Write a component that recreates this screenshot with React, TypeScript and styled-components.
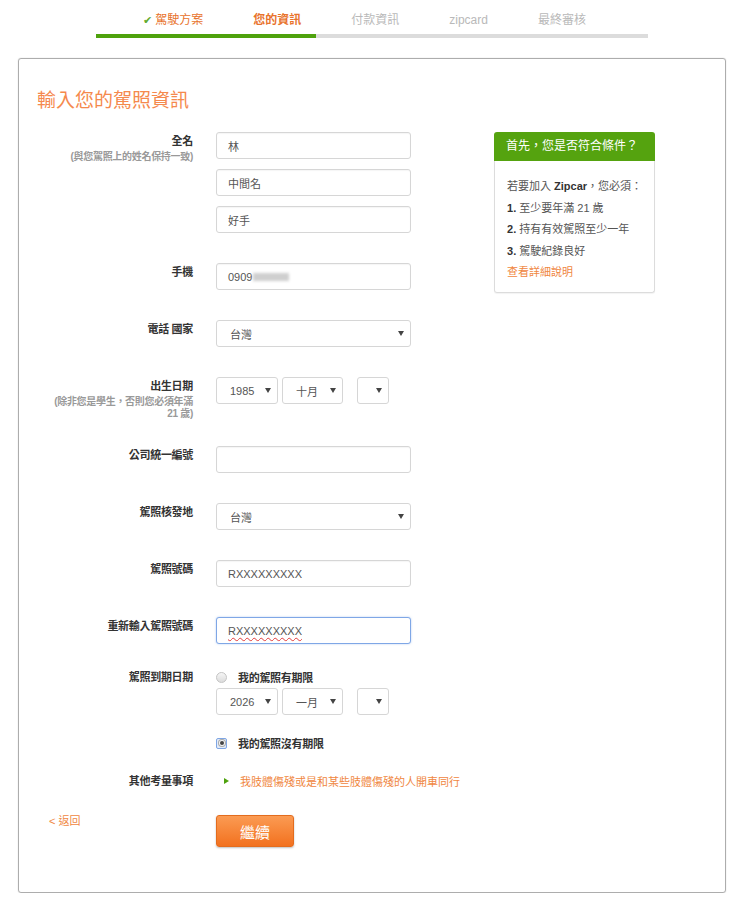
import React from 'react';
import styled, { createGlobalStyle } from 'styled-components';

type StepState = 'done' | 'active' | 'todo';

const steps: { label: string; state: StepState }[] = [
  { label: '駕駛方案', state: 'done' },
  { label: '您的資訊', state: 'active' },
  { label: '付款資訊', state: 'todo' },
  { label: 'zipcard', state: 'todo' },
  { label: '最終審核', state: 'todo' },
];

const requirements = ['至少要年滿 21 歲', '持有有效駕照至少一年', '駕駛紀錄良好'];

export default function App() {
  return (
    <>
      <GlobalStyle />
      <Stepper>
        <StepList>
          {steps.map((s) => (
            <Step key={s.label} $state={s.state}>
              {s.state === 'done' && <Check>✔</Check>}
              {s.label}
            </Step>
          ))}
        </StepList>
        <Track>
          <Fill $width={220} />
        </Track>
      </Stepper>

      <Card>
        <Title>輸入您的駕照資訊</Title>
        <Body>
          <Form>
            <Row>
              <LabelCell>
                <LabelText>全名</LabelText>
                <Hint>(與您駕照上的姓名保持一致)</Hint>
              </LabelCell>
              <Stack>
                <Field>林</Field>
                <Field>中間名</Field>
                <Field>好手</Field>
              </Stack>
            </Row>

            <Row>
              <LabelCell>
                <LabelText>手機</LabelText>
              </LabelCell>
              <Field>
                0909<Blurred />
              </Field>
            </Row>

            <Row>
              <LabelCell>
                <LabelText>電話 國家</LabelText>
              </LabelCell>
              <Select>台灣</Select>
            </Row>

            <Row $mb={26}>
              <LabelCell>
                <LabelText>出生日期</LabelText>
                <Hint>
                  (除非您是學生，否則您必須年滿
                  <br />
                  21 歲)
                </Hint>
              </LabelCell>
              <DateRow>
                <Select $w={62}>1985</Select>
                <Select $w={61}>十月</Select>
                <Select $w={32} $gapLeft={10} />
              </DateRow>
            </Row>

            <Row>
              <LabelCell>
                <LabelText>公司統一編號</LabelText>
              </LabelCell>
              <Field />
            </Row>

            <Row>
              <LabelCell>
                <LabelText>駕照核發地</LabelText>
              </LabelCell>
              <Select>台灣</Select>
            </Row>

            <Row>
              <LabelCell>
                <LabelText>駕照號碼</LabelText>
              </LabelCell>
              <Field>RXXXXXXXXX</Field>
            </Row>

            <Row $mb={24}>
              <LabelCell>
                <LabelText>重新輸入駕照號碼</LabelText>
              </LabelCell>
              <Field $focused>
                <SpellError>RXXXXXXXXX</SpellError>
              </Field>
            </Row>

            <Row $mb={20}>
              <LabelCell>
                <LabelText>駕照到期日期</LabelText>
              </LabelCell>
              <div>
                <RadioLine>
                  <Radio />
                  我的駕照有期限
                </RadioLine>
                <DateRow $top={2}>
                  <Select $w={62}>2026</Select>
                  <Select $w={61}>一月</Select>
                  <Select $w={32} $gapLeft={10} />
                </DateRow>
                <RadioLine $top={19}>
                  <Radio $checked />
                  我的駕照沒有期限
                </RadioLine>
              </div>
            </Row>

            <Row $mb={25}>
              <LabelCell>
                <LabelText>其他考量事項</LabelText>
              </LabelCell>
              <NoteLine>
                <Triangle />
                <NoteText>我肢體傷殘或是和某些肢體傷殘的人開車同行</NoteText>
              </NoteLine>
            </Row>

            <Row $mb={0}>
              <BackLink>&lt; 返回</BackLink>
              <div>
                <ContinueButton>繼續</ContinueButton>
              </div>
            </Row>
          </Form>

          <Sidebar>
            <SideHead>首先，您是否符合條件？</SideHead>
            <SideBody>
              <SideLine>
                若要加入 <b>Zipcar</b>，您必須：
              </SideLine>
              {requirements.map((r, i) => (
                <SideLine key={r}>
                  <b>{i + 1}.</b> {r}
                </SideLine>
              ))}
              <SideLine>
                <SideLink>查看詳細說明</SideLink>
              </SideLine>
            </SideBody>
          </Sidebar>
        </Body>
      </Card>
    </>
  );
}

// --- styles ---

const orange = '#f0873f';

const GlobalStyle = createGlobalStyle`
  html, body { margin: 0; padding: 0; background: #fff; }
  body {
    font-family: "Liberation Sans", "Noto Sans CJK TC", sans-serif;
    color: #555;
  }
  * { box-sizing: border-box; }
`;

const Stepper = styled.div`
  width: 552px;
  margin-left: 96px;
  padding-top: 12px;
`;

const StepList = styled.div`
  display: flex;
  gap: 50px;
  padding-left: 47px;
  height: 16px;
  line-height: 16px;
  font-size: 12px;
  white-space: nowrap;
`;

const Step = styled.span<{ $state: StepState }>`
  color: ${(p) => (p.$state === 'todo' ? '#b9b9b9' : '#e8732c')};
  font-weight: ${(p) => (p.$state === 'active' ? 700 : 400)};
`;

const Check = styled.span`
  font-family: "DejaVu Sans", sans-serif;
  color: #62ab2f;
  font-size: 11px;
  margin-right: 3px;
`;

const Track = styled.div`
  margin-top: 6px;
  height: 4px;
  background: #dcdcdc;
`;

const Fill = styled.div<{ $width: number }>`
  width: ${(p) => p.$width}px;
  height: 100%;
  background: #4ea20d;
`;

const Card = styled.div`
  margin: 20px 20px 0 18px;
  border: 1px solid #adadad;
  border-radius: 3px;
  box-shadow: 0 0 1px rgba(0, 0, 0, 0.3);
  padding: 29px 70px 45px 19px;
`;

const Title = styled.h1`
  margin: 0 0 18px -1px;
  font-size: 19px;
  line-height: 26px;
  font-weight: 400;
  color: #f5894d;
`;

const Body = styled.div`
  display: flex;
  align-items: flex-start;
  gap: 83px;
`;

const Form = styled.div`
  width: 373px;
`;

const Row = styled.div<{ $mb?: number }>`
  display: grid;
  grid-template-columns: 155px 195px;
  column-gap: 23px;
  align-items: start;
  margin-bottom: ${(p) => (p.$mb ?? 30)}px;
`;

const LabelCell = styled.div`
  text-align: right;
  padding-top: 2px;
`;

const LabelText = styled.div`
  font-size: 11px;
  line-height: 14px;
  font-weight: 700;
  color: #333;
  letter-spacing: -0.3px;
`;

const Hint = styled.div`
  margin-top: 3px;
  font-size: 10px;
  line-height: 12px;
  font-weight: 700;
  color: #999;
  letter-spacing: -0.3px;
`;

const Stack = styled.div`
  display: flex;
  flex-direction: column;
  gap: 10px;
`;

const Field = styled.div<{ $focused?: boolean }>`
  height: 27px;
  display: flex;
  align-items: center;
  padding: 0 11px;
  font-size: 11px;
  color: #555;
  background: #fff;
  border: 1px solid ${(p) => (p.$focused ? '#7fa7e6' : '#d6d6d6')};
  border-radius: 3px;
  box-shadow: ${(p) =>
    p.$focused ? '0 0 2px rgba(102, 150, 230, 0.5)' : 'inset 0 1px 1px rgba(0, 0, 0, 0.04)'};
`;

const SpellError = styled.span`
  text-decoration: underline wavy #e23c3c;
  text-decoration-thickness: 1px;
  text-underline-offset: 2px;
`;

const Blurred = styled.span`
  display: inline-block;
  width: 36px;
  height: 8px;
  margin-left: 1px;
  background: #cfcfcf;
  filter: blur(1.5px);
`;

const Select = styled.div<{ $w?: number; $gapLeft?: number }>`
  width: ${(p) => p.$w ?? 195}px;
  height: 27px;
  margin-left: ${(p) => p.$gapLeft ?? 0}px;
  display: flex;
  align-items: center;
  justify-content: space-between;
  padding: 0 6px 0 13px;
  font-size: 11px;
  color: #555;
  background: #fff;
  border: 1px solid #d6d6d6;
  border-radius: 3px;

  &::after {
    content: '';
    margin-left: auto;
    border-left: 3px solid transparent;
    border-right: 3px solid transparent;
    border-top: 5px solid #444;
  }
`;

const DateRow = styled.div<{ $top?: number }>`
  display: flex;
  gap: 4px;
  margin-top: ${(p) => p.$top ?? 0}px;
`;

const RadioLine = styled.div<{ $top?: number }>`
  display: flex;
  align-items: center;
  gap: 11px;
  height: 18px;
  margin-top: ${(p) => p.$top ?? 0}px;
  font-size: 11px;
  font-weight: 700;
  color: #333;
  letter-spacing: -0.3px;
`;

const Radio = styled.span<{ $checked?: boolean }>`
  flex: none;
  width: 11px;
  height: 11px;
  display: grid;
  place-items: center;
  border-radius: ${(p) => (p.$checked ? '2px' : '50%')};
  border: 1px solid ${(p) => (p.$checked ? '#7fa6e4' : '#c4c4c4')};
  background: ${(p) =>
    p.$checked ? '#e2ebf9' : 'linear-gradient(#f6f6f6, #dcdcdc)'};

  &::after {
    content: '';
    display: ${(p) => (p.$checked ? 'block' : 'none')};
    width: 4px;
    height: 4px;
    border-radius: 50%;
    background: #444;
    box-shadow: 0 0 0 1px #f4f4f4, 0 0 0 2px #aaa;
  }
`;

const NoteLine = styled.div`
  display: flex;
  align-items: center;
  height: 18px;
  padding-left: 8px;
`;

const Triangle = styled.span`
  width: 0;
  height: 0;
  border-left: 5px solid #4ea20d;
  border-top: 3.5px solid transparent;
  border-bottom: 3.5px solid transparent;
`;

const NoteText = styled.span`
  margin-left: 11px;
  font-size: 11px;
  color: ${orange};
  white-space: nowrap;
`;

const BackLink = styled.div`
  padding-left: 11px;
  font-size: 11px;
  line-height: 12px;
  color: ${orange};
`;

const ContinueButton = styled.button`
  width: 78px;
  height: 32px;
  padding: 0;
  font-family: "Liberation Sans", "Noto Sans CJK TC", sans-serif;
  font-size: 15px;
  color: #fff;
  border: 1px solid #e36c1e;
  border-radius: 3px;
  background: linear-gradient(#fb9b53, #f2711f);
  box-shadow: 0 1px 2px rgba(0, 0, 0, 0.25);
  cursor: pointer;
`;

const Sidebar = styled.div`
  width: 161px;
  flex: none;
`;

const SideHead = styled.div`
  height: 29px;
  line-height: 29px;
  padding: 0 12px;
  font-size: 12px;
  color: #fff;
  background: #55a30f;
  border-radius: 3px 3px 0 0;
  white-space: nowrap;
`;

const SideBody = styled.div`
  padding: 15px 4px 8px 12px;
  font-size: 11px;
  line-height: 21.5px;
  color: #555;
  border: 1px solid #dcdcdc;
  border-top: none;
  border-radius: 0 0 3px 3px;
  box-shadow: 0 1px 1px rgba(0, 0, 0, 0.05);

  b {
    color: #333;
  }
`;

const SideLine = styled.div`
  white-space: nowrap;
`;

const SideLink = styled.span`
  color: ${orange};
`;
